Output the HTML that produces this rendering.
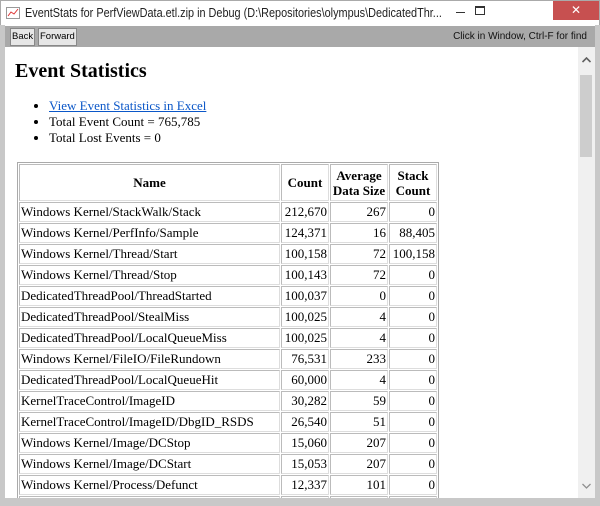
<!DOCTYPE html>
<html><head><style>
*{margin:0;padding:0;box-sizing:border-box}
body{width:600px;height:506px;overflow:hidden;background:#fff;font-family:"Liberation Sans",sans-serif;position:relative}
#title{position:absolute;left:0;top:0;width:600px;height:25px;background:#fff;border:1px solid #aaa;border-bottom:none}
#title .t{position:absolute;left:24px;top:5px;color:#222;font-family:"Liberation Sans",sans-serif;font-size:12.5px;white-space:nowrap;transform:scaleX(0.87);transform-origin:0 0}
#close{position:absolute;left:552px;top:0;width:46px;height:19px;background:#c75050;color:#fff;text-align:center;font-size:12px;line-height:18px}
#tb{position:absolute;left:5px;top:26px;width:590px;height:21px;background:#a9a9a9}
.btn{position:absolute;top:2px;height:18px;border:1px solid #888;background:#e6e6e6;font-size:9.5px;line-height:16px;padding:0 1px;color:#000}
#find{position:absolute;right:8px;top:5px;font-size:10px;color:#111}
#frame{position:absolute;left:0;top:25px;width:600px;height:481px;border-left:5px solid #c8c8c8;border-right:5px solid #c8c8c8;border-bottom:8px solid #c8c8c8}
#content{position:absolute;left:5px;top:47px;width:573px;height:451px;overflow:hidden;font-family:"Liberation Serif",serif;color:#000}
#sb{position:absolute;left:578px;top:47px;width:17px;height:451px;background:#f0f0f0}
#thumb{position:absolute;left:2px;top:28px;width:12px;height:82px;background:#cdcdcd}
h1{position:absolute;left:10px;top:13px;font-size:20px;font-weight:bold}
ul{position:absolute;left:44px;top:51px;font-size:13px;line-height:16px}
a{color:#0b57c8}
table{position:absolute;left:12px;top:115px;border:1px solid #aaa;border-spacing:1px;font-size:13px}
td,th{border:1px solid #bbb;border-right-color:#ddd;border-bottom-color:#ddd;padding:0 1px;height:20px;white-space:nowrap}
th{height:37px;font-weight:bold;line-height:15px}
td.n{text-align:right}
</style></head><body>
<div id="frame"></div>
<div id="title">
<svg style="position:absolute;left:5px;top:6px" width="14" height="12"><rect x="0.5" y="0.5" width="13" height="11" fill="#fff" stroke="#999"/><polyline points="2,9 5,5 8,7 12,2" fill="none" stroke="#d33"/></svg>
<div class="t">EventStats for PerfViewData.etl.zip in Debug (D:\Repositories\olympus\DedicatedThr...</div>
<div style="position:absolute;left:455px;top:11px;width:9px;height:1px;background:#333"></div>
<div style="position:absolute;left:474px;top:5px;width:10px;height:9px;border:1px solid #333;border-top-width:2px"></div>
<div id="close">✕</div>
</div>
<div id="tb">
<div class="btn" style="left:5px">Back</div>
<div class="btn" style="left:33px">Forward</div>
<div id="find">Click in Window, Ctrl-F for find</div>
</div>
<div id="content">
<h1>Event Statistics</h1>
<ul>
<li><a href="#">View Event Statistics in Excel</a></li>
<li>Total Event Count = 765,785</li>
<li>Total Lost Events = 0</li>
</ul>
<table>
<tr><th style="width:261px">Name</th><th style="width:48px">Count</th><th style="width:58px">Average<br>Data Size</th><th style="width:48px">Stack<br>Count</th></tr>
<tr><td>Windows Kernel/StackWalk/Stack</td><td class="n">212,670</td><td class="n">267</td><td class="n">0</td></tr>
<tr><td>Windows Kernel/PerfInfo/Sample</td><td class="n">124,371</td><td class="n">16</td><td class="n">88,405</td></tr>
<tr><td>Windows Kernel/Thread/Start</td><td class="n">100,158</td><td class="n">72</td><td class="n">100,158</td></tr>
<tr><td>Windows Kernel/Thread/Stop</td><td class="n">100,143</td><td class="n">72</td><td class="n">0</td></tr>
<tr><td>DedicatedThreadPool/ThreadStarted</td><td class="n">100,037</td><td class="n">0</td><td class="n">0</td></tr>
<tr><td>DedicatedThreadPool/StealMiss</td><td class="n">100,025</td><td class="n">4</td><td class="n">0</td></tr>
<tr><td>DedicatedThreadPool/LocalQueueMiss</td><td class="n">100,025</td><td class="n">4</td><td class="n">0</td></tr>
<tr><td>Windows Kernel/FileIO/FileRundown</td><td class="n">76,531</td><td class="n">233</td><td class="n">0</td></tr>
<tr><td>DedicatedThreadPool/LocalQueueHit</td><td class="n">60,000</td><td class="n">4</td><td class="n">0</td></tr>
<tr><td>KernelTraceControl/ImageID</td><td class="n">30,282</td><td class="n">59</td><td class="n">0</td></tr>
<tr><td>KernelTraceControl/ImageID/DbgID_RSDS</td><td class="n">26,540</td><td class="n">51</td><td class="n">0</td></tr>
<tr><td>Windows Kernel/Image/DCStop</td><td class="n">15,060</td><td class="n">207</td><td class="n">0</td></tr>
<tr><td>Windows Kernel/Image/DCStart</td><td class="n">15,053</td><td class="n">207</td><td class="n">0</td></tr>
<tr><td>Windows Kernel/Process/Defunct</td><td class="n">12,337</td><td class="n">101</td><td class="n">0</td></tr>
<tr><td>Windows Kernel/Process/DCStart</td><td class="n">1,000</td><td class="n">100</td><td class="n">0</td></tr>
</table>
</div>
<div id="sb">
<svg style="position:absolute;left:4px;top:10px" width="9" height="6"><polyline points="0.5,5 4.5,1 8.5,5" fill="none" stroke="#606060" stroke-width="1.6"/></svg>
<div id="thumb"></div>
<svg style="position:absolute;left:4px;top:436px" width="9" height="6"><polyline points="0.5,1 4.5,5 8.5,1" fill="none" stroke="#909090" stroke-width="1.3"/></svg>
</div>
</body></html>
